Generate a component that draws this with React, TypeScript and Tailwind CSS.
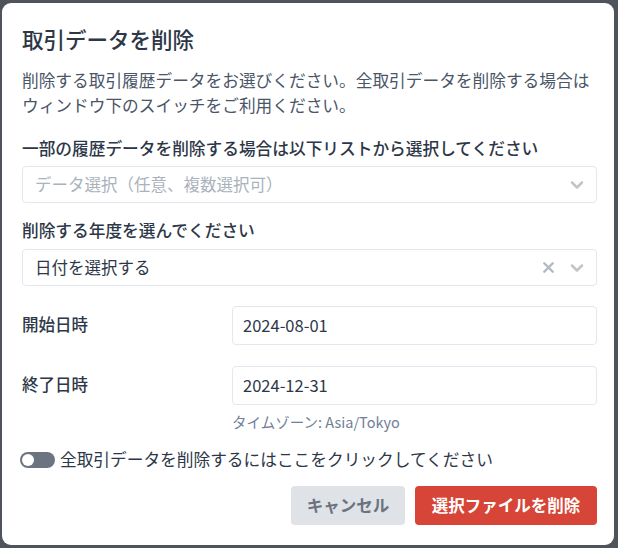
import { ChevronDown, X } from 'lucide-react'

const font = { fontFamily: '"Noto Sans CJK JP", "Noto Sans", sans-serif' }

function SelectBox({ value, placeholder, clearable }: { value?: string; placeholder?: string; clearable?: boolean }) {
  return (
    <div className="flex h-[37px] items-center rounded border border-[#e2e8f0] bg-white pl-[12px] pr-[9px]">
      <span className={value ? 'flex-1 text-[16.5px] text-[#2d3748]' : 'flex-1 text-[16.5px] text-[#aab2bc]'}>
        {value ?? placeholder}
      </span>
      {clearable && <X className="mr-[10px] h-[17px] w-[17px] text-[#b4bac2]" strokeWidth={3.4} />}
      <ChevronDown className="h-[20px] w-[20px] text-[#c0c5cb]" strokeWidth={3} />
    </div>
  )
}

function DateRow({ label, value }: { label: string; value: string }) {
  return (
    <div className="grid grid-cols-[210px_1fr] items-center">
      <span className="-mt-[3px] text-[16.5px] font-medium text-[#2d3748]">{label}</span>
      <div className="flex h-[39px] items-center rounded border border-[#e2e8f0] bg-white px-[10px] text-[16.5px] text-[#2d3748]">
        {value}
      </div>
    </div>
  )
}

export default function App() {
  return (
    <div className="h-[548px] w-[618px] bg-[#4e5459] pl-[2px] pr-[4px] pt-[3px]" style={font}>
      <div className="flex h-[542px] flex-col rounded-[9px] bg-white pl-[20px] pr-[17px] pt-[20px]">
        <h2 className="text-[21.5px] font-medium leading-[31px] text-[#2d3748]">取引データを削除</h2>

        <p className="mt-[14px] text-[16.7px] leading-[25px] text-[#4a5568]">
          削除する取引履歴データをお選びください。全取引データを削除する場合はウィンドウ下のスイッチをご利用ください。
        </p>

        <label className="mt-[18px] text-[16.7px] font-medium leading-[25px] text-[#2d3748]">
          一部の履歴データを削除する場合は以下リストから選択してください
        </label>
        <div className="mt-[5px]">
          <SelectBox placeholder="データ選択（任意、複数選択可）" />
        </div>

        <label className="mt-[15px] text-[16.7px] font-medium leading-[25px] text-[#2d3748]">
          削除する年度を選んでください
        </label>
        <div className="mt-[6px]">
          <SelectBox value="日付を選択する" clearable />
        </div>

        <div className="mt-[20px] flex flex-col gap-[21px]">
          <DateRow label="開始日時" value="2024-08-01" />
          <DateRow label="終了日時" value="2024-12-31" />
        </div>
        <p className="ml-[210px] mt-[7px] text-[14.5px] leading-[20px] text-[#718096]">タイムゾーン: Asia/Tokyo</p>

        <div className="-ml-[2px] mt-[15px] flex items-center gap-[5px]">
          <span className="relative inline-block h-[16px] w-[35px] rounded-full bg-[#6b7480]">
            <span className="absolute left-[2px] top-[2px] h-[12px] w-[12px] rounded-full bg-white" />
          </span>
          <span className="text-[16.7px] leading-[25px] text-[#2d3748]">全取引データを削除するにはここをクリックしてください</span>
        </div>

        <div className="mt-[14px] flex justify-end gap-[10px]">
          <button className="h-[39px] w-[114px] rounded bg-[#dfe2e6] text-[16.5px] font-bold text-[#6b7280]">
            キャンセル
          </button>
          <button className="h-[39px] w-[182px] rounded bg-[#d64537] text-[16.5px] font-bold text-white">
            選択ファイルを削除
          </button>
        </div>
      </div>
    </div>
  )
}
